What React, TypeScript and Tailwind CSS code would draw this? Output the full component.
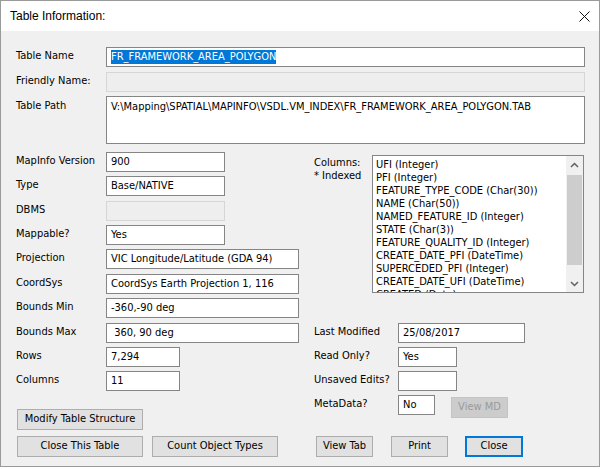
import React from "react";

const FONT = "[font-family:'DejaVu_Sans_Condensed','DejaVu_Sans',sans-serif] [font-stretch:condensed]";

function Box({ w, value, disabled, className = "" }: { w: string; value?: string; disabled?: boolean; className?: string }) {
  return (
    <div
      className={`${w} h-[20px] shrink-0 border px-[4px] flex items-center whitespace-pre text-[11px] text-black ${
        disabled ? "bg-[#eeeeee] border-[#d6d6d6]" : "bg-white border-[#858585]"
      } ${className}`}
    >
      {value}
    </div>
  );
}

function Btn({ w, label, primary, disabled, className = "" }: { w: string; label: string; primary?: boolean; disabled?: boolean; className?: string }) {
  return (
    <div
      className={`${w} h-[21px] shrink-0 flex items-center justify-center text-[11px] ${
        primary
          ? "border-2 border-[#0078d7] bg-[#e1e1e1] text-black"
          : disabled
          ? "border border-[#c4c4c4] bg-[#cccccc] text-[#9a9a9a]"
          : "border border-[#adadad] bg-[#e1e1e1] text-black"
      } ${className}`}
    >
      {label}
    </div>
  );
}

const leftRows = [
  { label: "MapInfo Version", value: "900", w: "w-[119px]", mt: "" },
  { label: "Type", value: "Base/NATIVE", w: "w-[119px]", mt: "mt-[4px]" },
  { label: "DBMS", value: "", w: "w-[119px]", mt: "mt-[5px]", disabled: true },
  { label: "Mappable?", value: "Yes", w: "w-[119px]", mt: "mt-[4px]" },
  { label: "Projection", value: "VIC Longitude/Latitude (GDA 94)", w: "w-[193px]", mt: "mt-[4px]" },
  { label: "CoordSys", value: "CoordSys Earth Projection 1, 116", w: "w-[193px]", mt: "mt-[5px]" },
  { label: "Bounds Min", value: "-360,-90 deg", w: "w-[193px]", mt: "mt-[4px]" },
  { label: "Bounds Max", value: " 360, 90 deg", w: "w-[193px]", mt: "mt-[5px]" },
  { label: "Rows", value: "7,294", w: "w-[74px]", mt: "mt-[4px]" },
  { label: "Columns", value: "11", w: "w-[74px]", mt: "mt-[4px]" },
];

const columns = [
  "UFI (Integer)",
  "PFI (Integer)",
  "FEATURE_TYPE_CODE (Char(30))",
  "NAME (Char(50))",
  "NAMED_FEATURE_ID (Integer)",
  "STATE (Char(3))",
  "FEATURE_QUALITY_ID (Integer)",
  "CREATE_DATE_PFI (DateTime)",
  "SUPERCEDED_PFI (Integer)",
  "CREATE_DATE_UFI (DateTime)",
  "CREATED (Date)",
];

function Chevron({ up }: { up?: boolean }) {
  return (
    <svg width="9" height="6" viewBox="0 0 9 6">
      <polyline
        points={up ? "1,5 4.5,1.5 8,5" : "1,1 4.5,4.5 8,1"}
        fill="none"
        stroke="#606060"
        strokeWidth="1.5"
      />
    </svg>
  );
}

export default function App() {
  return (
    <div className={`w-[600px] h-[469px] bg-white ${FONT}`}>
      <div className="w-[600px] h-[467px] border border-[#9a9a9a] flex flex-col bg-[#f0f0f0]">
        {/* title bar */}
        <div className="h-[30px] shrink-0 bg-white flex items-center justify-between pl-[9px] pr-[9px]">
          <span className="[font-family:'Liberation_Sans',Arial,sans-serif] text-[12px] text-black">Table Information:</span>
          <svg width="11" height="11" viewBox="0 0 11 11">
            <line x1="0.5" y1="0.5" x2="10.5" y2="10.5" stroke="#111" strokeWidth="1" />
            <line x1="10.5" y1="0.5" x2="0.5" y2="10.5" stroke="#111" strokeWidth="1" />
          </svg>
        </div>

        {/* body */}
        <div className="flex flex-col pl-[15px] pr-[14px] pt-[16px] text-[11px] text-black">
          <div className="flex h-[20px] items-center">
            <div className="w-[90px] shrink-0 -mt-[1px]">Table Name</div>
            <div className="flex-1 h-[20px] border border-[#858585] bg-white px-[4px] flex items-center">
              <span className="bg-[#0078d7] text-white leading-[14px]">FR_FRAMEWORK_AREA_POLYGON</span>
            </div>
          </div>
          <div className="flex h-[20px] items-center mt-[5px]">
            <div className="w-[90px] shrink-0 -mt-[1px]">Friendly Name:</div>
            <div className="flex-1 h-[20px] border border-[#d6d6d6] bg-[#eeeeee]" />
          </div>
          <div className="flex mt-[4px]">
            <div className="w-[90px] shrink-0 pt-[2px]">Table Path</div>
            <div className="flex-1 h-[48px] border border-[#858585] bg-white px-[4px] pt-[3px] leading-[13px]">
              V:\Mapping\SPATIAL\MAPINFO\VSDL.VM_INDEX\FR_FRAMEWORK_AREA_POLYGON.TAB
            </div>
          </div>

          {/* two columns */}
          <div className="flex mt-[8px]">
            <div className="w-[298px] shrink-0 flex flex-col">
              {leftRows.map((r) => (
                <div key={r.label} className={`flex h-[20px] items-center ${r.mt}`}>
                  <div className="w-[90px] shrink-0 -mt-[1px]">{r.label}</div>
                  <Box w={r.w} value={r.value} disabled={r.disabled} />
                </div>
              ))}
              <Btn w="w-[126px]" label="Modify Table Structure" className="mt-[18px] ml-[1px]" />
            </div>

            <div className="flex-1 flex flex-col">
              <div className="flex mt-[3px]">
                <div className="w-[58px] shrink-0 leading-[13px] pt-[1px]">
                  <div>Columns:</div>
                  <div>* Indexed</div>
                </div>
                <div className="w-[212px] h-[138px] border border-[#858585] bg-white flex">
                  <div className="flex-1 overflow-hidden pl-[3px] pt-[2px] leading-[13px] whitespace-nowrap">
                    {columns.map((c) => (
                      <div key={c}>{c}</div>
                    ))}
                  </div>
                  <div className="w-[17px] shrink-0 bg-[#f0f0f0] flex flex-col">
                    <div className="h-[17px] flex items-center justify-center">
                      <Chevron up />
                    </div>
                    <div className="flex-1 flex flex-col">
                      <div className="mt-[2px] h-[90px] mx-[1px] bg-[#cdcdcd]" />
                    </div>
                    <div className="h-[17px] flex items-center justify-center">
                      <Chevron />
                    </div>
                  </div>
                </div>
              </div>

              <div className="flex h-[20px] items-center mt-[30px]">
                <div className="w-[84px] shrink-0 -mt-[1px]">Last Modified</div>
                <Box w="w-[127px]" value="25/08/2017" />
              </div>
              <div className="flex h-[20px] items-center mt-[4px]">
                <div className="w-[84px] shrink-0 -mt-[1px]">Read Only?</div>
                <Box w="w-[59px]" value="Yes" />
              </div>
              <div className="flex h-[20px] items-center mt-[4px]">
                <div className="w-[84px] shrink-0 -mt-[1px]">Unsaved Edits?</div>
                <Box w="w-[59px]" value="" />
              </div>
              <div className="flex h-[20px] items-start mt-[4px]">
                <div className="w-[84px] shrink-0 h-[19px] flex items-center">MetaData?</div>
                <Box w="w-[37px]" value="No" />
                <Btn w="w-[57px]" label="View MD" disabled className="ml-[16px] mt-[2px] h-[20px]" />
              </div>
            </div>
          </div>

          {/* bottom buttons */}
          <div className="flex mt-[6px]">
            <div className="w-[298px] shrink-0 flex">
              <Btn w="w-[126px]" label="Close This Table" className="ml-[1px]" />
              <Btn w="w-[126px]" label="Count Object Types" className="ml-[9px]" />
            </div>
            <div className="flex">
              <Btn w="w-[57px]" label="View Tab" className="ml-[2px]" />
              <Btn w="w-[57px]" label="Print" className="ml-[18px]" />
              <Btn w="w-[58px]" label="Close" primary className="ml-[17px]" />
            </div>
          </div>
        </div>
      </div>
    </div>
  );
}
